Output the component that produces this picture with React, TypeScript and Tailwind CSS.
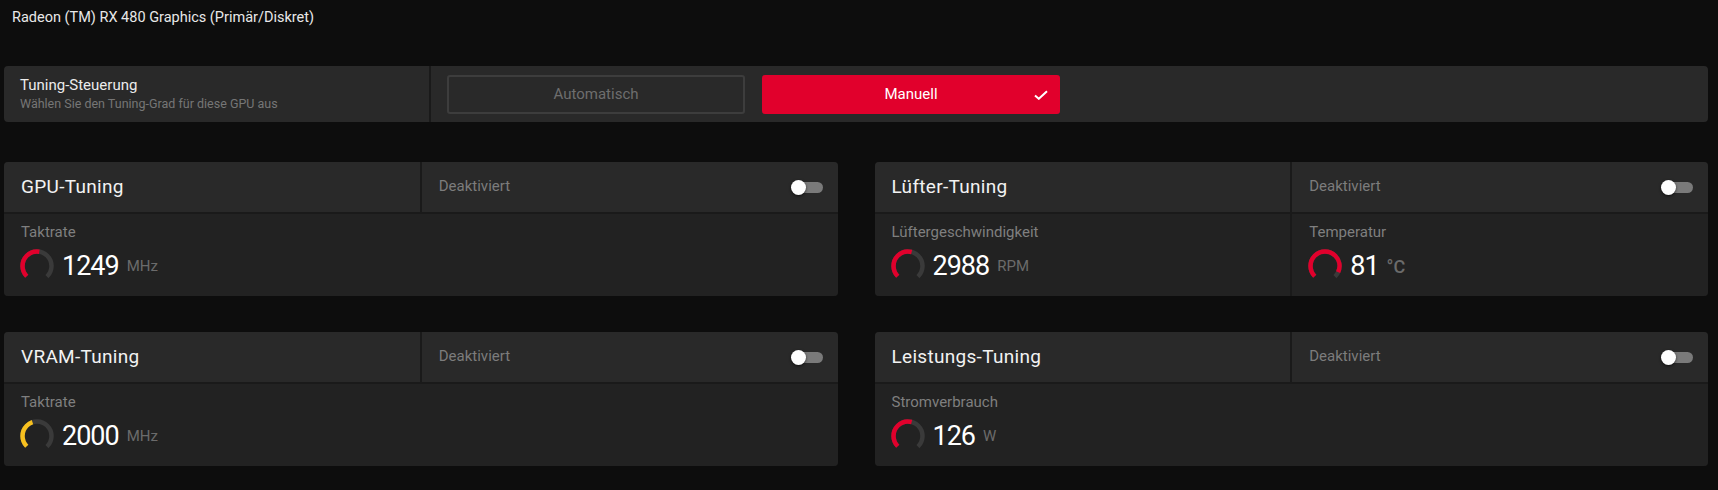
import clsx from "clsx";

type Metric = {
	label: string;
	value: string;
	unit: string;
	fraction: number;
	color: string;
	bigUnit?: boolean;
};

type CardProps = {
	title: string;
	metrics: Metric[];
};

const RED = "#e1002c";
const YELLOW = "#f7c01f";

function Gauge({ fraction, color }: { fraction: number; color: string }) {
	const r = 14.5;
	const c = 2 * Math.PI * r;
	const sweep = c * 0.75;
	return (
		<svg width="34" height="34" viewBox="0 0 34 34" className="shrink-0">
			<g transform="rotate(135 17 17)">
				<circle
					cx="17"
					cy="17"
					r={r}
					fill="none"
					stroke="#3a3a3a"
					strokeWidth="4.5"
					strokeDasharray={`${sweep} ${c}`}
				/>
				<circle
					cx="17"
					cy="17"
					r={r}
					fill="none"
					stroke={color}
					strokeWidth="4.5"
					strokeDasharray={`${sweep * fraction} ${c}`}
				/>
			</g>
		</svg>
	);
}

function Toggle() {
	return (
		<div className="relative h-[15px] w-[32px]">
			<div className="absolute right-0 top-[2px] h-[11px] w-[28px] rounded-full bg-[#7a7a7a]" />
			<div className="absolute left-0 top-0 size-[15px] rounded-full bg-white shadow-[0_1px_3px_rgba(0,0,0,0.6)]" />
		</div>
	);
}

function TuningCard({ title, metrics }: CardProps) {
	return (
		<div className="grid grid-cols-2 gap-[2px] overflow-hidden rounded-[4px] bg-[#1a1a1a]">
			<div className="flex h-[50px] items-center bg-[#292929] pl-[17px] text-[19px] tracking-[0.3px] text-[#f2f2f2]">
				{title}
			</div>
			<div className="flex h-[50px] items-center justify-between bg-[#292929] pl-[17px] pr-[15px]">
				<span className="-mt-[2px] text-[15px] text-[#7c7c7c]">Deaktiviert</span>
				<Toggle />
			</div>
			{metrics.map((m) => (
				<div
					key={m.label}
					className={clsx(
						"h-[82px] bg-[#222222] pl-[16px] pt-[9px]",
						metrics.length === 1 && "col-span-2",
					)}
				>
					<p className="pl-[1px] text-[15px] leading-[18px] text-[#7f7f7f]">
						{m.label}
					</p>
					<div className="mt-[8px] flex items-center gap-[8px]">
						<Gauge fraction={m.fraction} color={m.color} />
						<span className="text-[27px] leading-[34px] tracking-[-1px] text-white">
							{m.value}
						</span>
						<span
							className={clsx(
								"text-[#6b6b6b]",
								m.bigUnit ? "text-[18px] font-medium" : "text-[15px]",
							)}
						>
							{m.unit}
						</span>
					</div>
				</div>
			))}
		</div>
	);
}

export default function App() {
	return (
		<div className="h-[490px] w-full overflow-hidden bg-[#0d0d0d] font-['Roboto',sans-serif]">
			<div className="h-[66px] px-[12px] pt-[8px] text-[14.5px] leading-[20px] text-[#e8e8e8]">
				Radeon (TM) RX 480 Graphics (Primär/Diskret)
			</div>

			<div className="pl-[4px] pr-[10px]">
				<section className="flex h-[56px] overflow-hidden rounded-[4px] bg-[#292929]">
					<div className="flex w-[425px] flex-col justify-center gap-[2px] pl-[16px]">
						<p className="text-[15px] leading-[18px] text-[#ececec]">Tuning-Steuerung</p>
						<p className="text-[12.5px] leading-[16px] text-[#767676]">
							Wählen Sie den Tuning-Grad für diese GPU aus
						</p>
					</div>
					<div className="w-[2px] bg-[#1a1a1a]" />
					<div className="flex items-center gap-[17px] pl-[16px]">
						<button className="h-[39px] w-[298px] rounded-[3px] border-2 border-[#3d3d3d] text-[15px] text-[#6e6e6e]">
							Automatisch
						</button>
						<button className="relative flex h-[39px] w-[298px] items-center justify-center rounded-[3px] bg-[#e1002c] text-[15px] text-white">
							Manuell
							<svg
								width="14"
								height="10"
								viewBox="0 0 14 10"
								className="absolute right-[12px] top-[15px]"
							>
								<path
									d="M1 5.5 L4.8 8.8 L13 1.2"
									fill="none"
									stroke="white"
									strokeWidth="2"
								/>
							</svg>
						</button>
					</div>
				</section>

				<div className="mt-[40px] grid grid-cols-2 gap-x-[37px] gap-y-[36px]">
					<TuningCard
						title="GPU-Tuning"
						metrics={[
							{ label: "Taktrate", value: "1249", unit: "MHz", fraction: 0.53, color: RED },
						]}
					/>
					<TuningCard
						title="Lüfter-Tuning"
						metrics={[
							{
								label: "Lüftergeschwindigkeit",
								value: "2988",
								unit: "RPM",
								fraction: 0.55,
								color: RED,
							},
							{
								label: "Temperatur",
								value: "81",
								unit: "°C",
								fraction: 0.92,
								color: RED,
								bigUnit: true,
							},
						]}
					/>
					<TuningCard
						title="VRAM-Tuning"
						metrics={[
							{ label: "Taktrate", value: "2000", unit: "MHz", fraction: 0.43, color: YELLOW },
						]}
					/>
					<TuningCard
						title="Leistungs-Tuning"
						metrics={[
							{ label: "Stromverbrauch", value: "126", unit: "W", fraction: 0.55, color: RED },
						]}
					/>
				</div>
			</div>
		</div>
	);
}
